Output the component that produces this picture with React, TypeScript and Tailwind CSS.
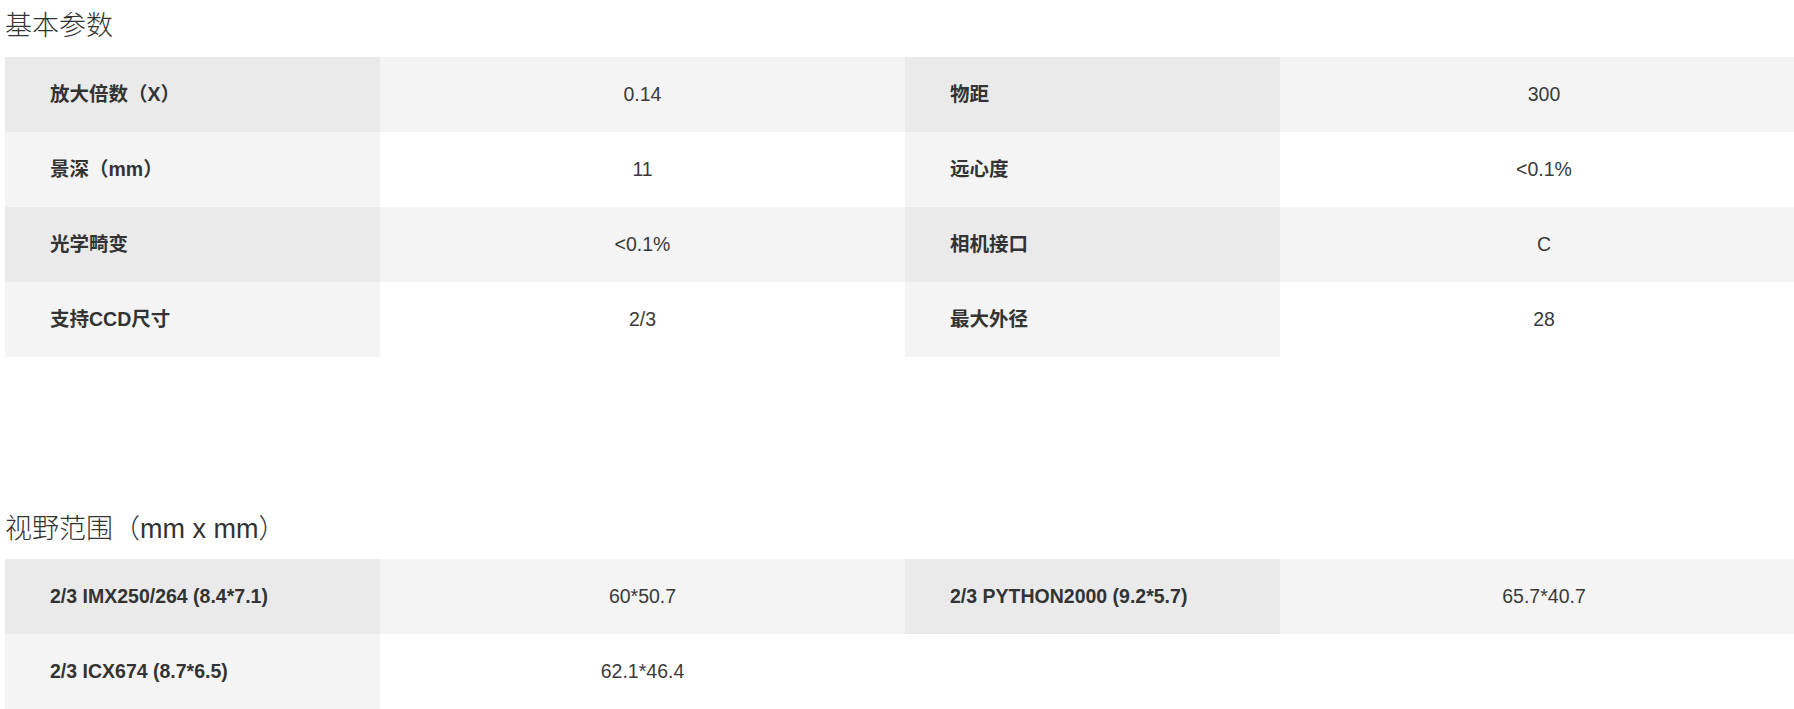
type Cell = { label: string; value: string };

const basic: Cell[][] = [
  [
    { label: '放大倍数（X）', value: '0.14' },
    { label: '物距', value: '300' },
  ],
  [
    { label: '景深（mm）', value: '11' },
    { label: '远心度', value: '<0.1%' },
  ],
  [
    { label: '光学畸变', value: '<0.1%' },
    { label: '相机接口', value: 'C' },
  ],
  [
    { label: '支持CCD尺寸', value: '2/3' },
    { label: '最大外径', value: '28' },
  ],
];

const fov: Cell[][] = [
  [
    { label: '2/3 IMX250/264 (8.4*7.1)', value: '60*50.7' },
    { label: '2/3 PYTHON2000 (9.2*5.7)', value: '65.7*40.7' },
  ],
  [{ label: '2/3 ICX674 (8.7*6.5)', value: '62.1*46.4' }],
];

const font = "font-['Liberation_Sans','Noto_Sans_CJK_SC',sans-serif]";

function SpecTable({ rows }: { rows: Cell[][] }) {
  return (
    <div className="w-max">
      {rows.map((row, i) => {
        const odd = i % 2 === 0;
        return (
          <div key={i} className="grid grid-cols-[375px_525px_375px_528px] h-[75px]">
            {[0, 1].map((j) => {
              const c = row[j];
              if (!c) {
                return (
                  <div key={j} className="contents">
                    <div />
                    <div />
                  </div>
                );
              }
              return (
                <div key={j} className="contents">
                  <div
                    className={`flex items-center pl-[45px] text-[19.5px] font-bold text-[#333] ${odd ? 'bg-[#eaeaea]' : 'bg-[#f4f4f4]'}`}
                  >
                    {c.label}
                  </div>
                  <div
                    className={`flex items-center justify-center text-[19.5px] text-[#3a3a3a] ${odd ? 'bg-[#f4f4f4]' : 'bg-white'}`}
                  >
                    {c.value}
                  </div>
                </div>
              );
            })}
          </div>
        );
      })}
    </div>
  );
}

export default function App() {
  return (
    <div className={`w-[1794px] h-[709px] overflow-hidden bg-white pl-[5px] ${font}`}>
      <h2 className="h-[52px] leading-[52px] text-[27px] font-light text-[#333]">基本参数</h2>
      <div className="mt-[5px]">
        <SpecTable rows={basic} />
      </div>

      <h2 className="mt-[146px] h-[52px] leading-[52px] text-[27px] font-light text-[#333]">
        视野范围（mm x mm）
      </h2>
      <div className="mt-[4px]">
        <SpecTable rows={fov} />
      </div>
    </div>
  );
}
